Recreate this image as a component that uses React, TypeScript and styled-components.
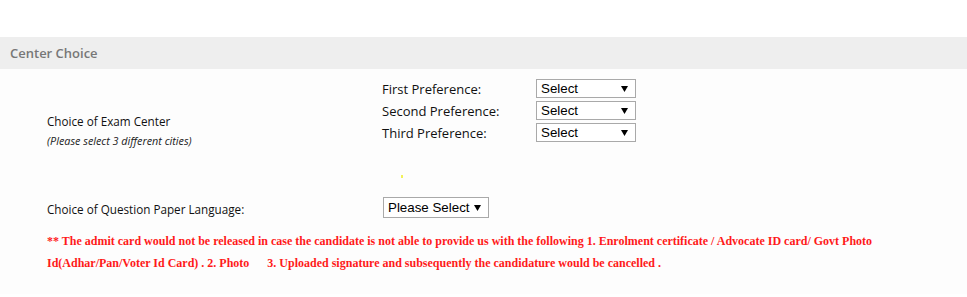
import React from "react";
import styled, { createGlobalStyle } from "styled-components";

const Global = createGlobalStyle`
  html, body { margin: 0; padding: 0; background: #ffffff; }
  body { font-family: "Open Sans", "DejaVu Sans", sans-serif; }
`;

const Page = styled.div`
  padding-top: 37px;
  width: 967px;
`;

const SectionHeader = styled.div`
  height: 32px;
  background: #eeeeee;
  display: flex;
  align-items: center;
  padding-left: 10px;
  font-size: 13px;
  font-weight: 600;
  color: #777777;
`;

const Body = styled.div`
  background: #fdfdfd;
  padding: 10px 0 20px 47px;
`;

const Row = styled.div`
  display: flex;
  align-items: flex-start;
`;

const LeftCell = styled.div<{ $width: number; $top: number }>`
  width: ${(p) => p.$width}px;
  padding-top: ${(p) => p.$top}px;
  display: flex;
  flex-direction: column;
  gap: 4px;
`;

const Label = styled.div`
  font-size: 11.7px;
  color: #111;
`;

const Hint = styled.div`
  font-size: 10.8px;
  font-style: italic;
  color: #222;
`;

const PrefList = styled.div`
  display: flex;
  flex-direction: column;
  gap: 3px;
`;

const PrefRow = styled.div`
  display: flex;
  align-items: center;
`;

const PrefLabel = styled.div`
  width: 154px;
  font-size: 13px;
  color: #111;
`;

const SelectBox = styled.div<{ $width: number; $height: number }>`
  box-sizing: border-box;
  width: ${(p) => p.$width}px;
  height: ${(p) => p.$height}px;
  border: 1px solid #a9a9a9;
  background: #ffffff;
  display: flex;
  align-items: center;
  justify-content: space-between;
  padding: 0 7px 0 4px;
  font-family: "Liberation Sans", Arial, sans-serif;
  font-size: 13.333px;
  color: #000;
`;

const Arrow = () => (
  <svg width="7" height="6" viewBox="0 0 7 6">
    <path d="M0 0 H7 L3.5 6 Z" fill="#000" />
  </svg>
);

const Spacer = styled.div`
  height: 49px;
  position: relative;
`;

const Dot = styled.div`
  position: absolute;
  left: 354px;
  top: 27px;
  width: 2px;
  height: 3px;
  background: #f2f25a;
`;

const Notice = styled.div`
  margin-top: 12px;
  width: 830px;
  font-family: "Liberation Serif", "Times New Roman", serif;
  font-weight: bold;
  font-size: 12px;
  line-height: 22px;
  color: #ff1a1a;
`;

function Select({ text, width, height }: { text: string; width: number; height: number }) {
  return (
    <SelectBox $width={width} $height={height}>
      <span>{text}</span>
      <Arrow />
    </SelectBox>
  );
}

export default function App() {
  return (
    <>
      <Global />
      <Page>
        <SectionHeader>Center Choice</SectionHeader>
        <Body>
          <Row>
            <LeftCell $width={335} $top={34}>
              <Label>Choice of Exam Center</Label>
              <Hint>(Please select 3 different cities)</Hint>
            </LeftCell>
            <PrefList>
              {["First Preference:", "Second Preference:", "Third Preference:"].map((l) => (
                <PrefRow key={l}>
                  <PrefLabel>{l}</PrefLabel>
                  <Select text="Select" width={100} height={19} />
                </PrefRow>
              ))}
            </PrefList>
          </Row>
          <Spacer>
            <Dot />
          </Spacer>
          <Row>
            <LeftCell $width={336} $top={4}>
              <Label>Choice of Question Paper Language:</Label>
            </LeftCell>
            <Select text="Please Select" width={106} height={21} />
          </Row>
          <Notice>
            ** The admit card would not be released in case the candidate is not able to provide us with the following 1. Enrolment certificate / Advocate ID card/ Govt Photo Id(Adhar/Pan/Voter Id Card) . 2. Photo&nbsp;&nbsp;&nbsp;&nbsp;&nbsp; 3. Uploaded signature and subsequently the candidature would be cancelled .
          </Notice>
        </Body>
      </Page>
    </>
  );
}
